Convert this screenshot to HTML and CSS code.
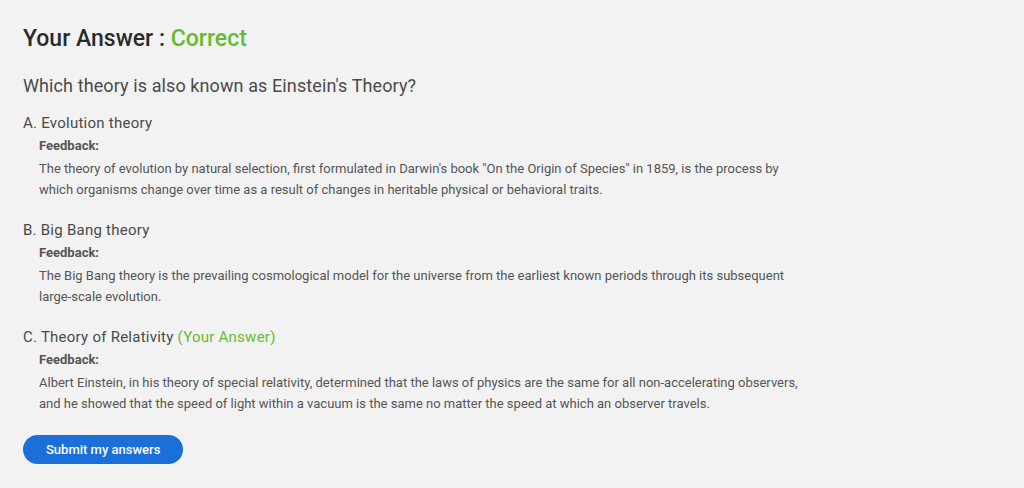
FILE: index.html
```html
<!DOCTYPE html>
<html lang="en">
<head>
<meta charset="utf-8">
<title>Quiz result</title>
<link rel="stylesheet" href="styles.css">
</head>
<body>
<main class="quiz">
  <h1 class="result">Your Answer : <span class="correct">Correct</span></h1>
  <h2 class="question">Which theory is also known as Einstein's Theory?</h2>
  <ol class="options">
    <li class="option">
      <div class="option-title">A. Evolution theory</div>
      <div class="feedback">
        <div class="feedback-label">Feedback:</div>
        <p class="feedback-text">The theory of evolution by natural selection, first formulated in Darwin's book "On the Origin of Species" in 1859, is the process by which organisms change over time as a result of changes in heritable physical or behavioral traits.</p>
      </div>
    </li>
    <li class="option">
      <div class="option-title">B. Big Bang theory</div>
      <div class="feedback">
        <div class="feedback-label">Feedback:</div>
        <p class="feedback-text">The Big Bang theory is the prevailing cosmological model for the universe from the earliest known periods through its subsequent <span class="nowrap">large-scale</span> evolution.</p>
      </div>
    </li>
    <li class="option">
      <div class="option-title">C. Theory of Relativity <span class="yours">(Your Answer)</span></div>
      <div class="feedback">
        <div class="feedback-label">Feedback:</div>
        <p class="feedback-text">Albert Einstein, in his theory of special relativity, determined that the laws of physics are the same for all non-accelerating observers, and he showed that the speed of light within a vacuum is the same no matter the speed at which an observer travels.</p>
      </div>
    </li>
  </ol>
  <button class="submit" type="button">Submit my answers</button>
</main>
</body>
</html>
```
FILE: styles.css
```css
html, body {
  margin: 0;
  padding: 0;
  background: #f2f2f2;
}
body {
  font-family: Roboto, "Liberation Sans", Arial, sans-serif;
  color: #444;
}
.quiz {
  padding: 25px 23px 20px 23px;
}
.result {
  margin: 0;
  font-size: 23px;
  line-height: 28px;
  font-weight: 500;
  color: #2a2a2a;
}
.correct {
  color: #66bb33;
}
.question {
  margin: 21px 0 0 0;
  font-size: 18px;
  line-height: 24px;
  font-weight: 400;
  letter-spacing: 0.1px;
  color: #4a4a4a;
}
.options {
  list-style: none;
  margin: 13px 0 0 0;
  padding: 0;
}
.option {
  margin-bottom: 18px;
}
.option-title {
  font-size: 15px;
  line-height: 24px;
  letter-spacing: 0.25px;
  color: #4a4a4a;
}
.yours {
  color: #66bb33;
}
.feedback {
  padding-left: 16px;
  width: 772px;
}
.feedback-label {
  font-size: 13px;
  font-weight: 700;
  line-height: 22px;
  margin-bottom: 1px;
  color: #555;
}
.feedback-text {
  margin: 0;
  font-size: 13px;
  line-height: 21px;
  color: #555;
}
.nowrap {
  white-space: nowrap;
}
.submit {
  margin-top: 3px;
  height: 29px;
  padding: 0 23px;
  border: none;
  border-radius: 15px;
  background: #1a6fd8;
  color: #fff;
  font-family: Roboto, "Liberation Sans", Arial, sans-serif;
  font-size: 13px;
  font-weight: 500;
}
```
